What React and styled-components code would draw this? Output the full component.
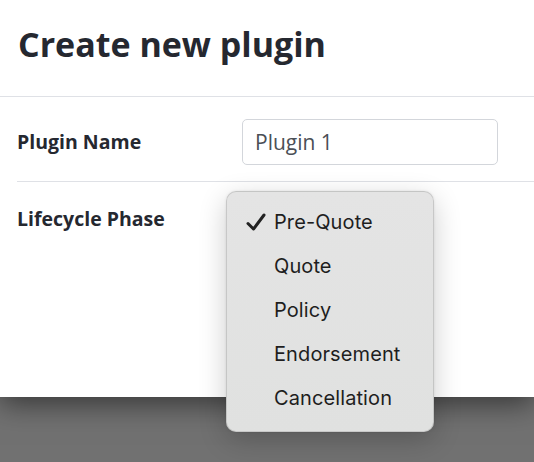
import React from "react";
import styled, { createGlobalStyle } from "styled-components";

const GlobalStyle = createGlobalStyle`
  html, body {
    margin: 0;
    padding: 0;
    width: 534px;
    height: 462px;
    overflow: hidden;
    background: #717171;
  }
  #root {
    height: 462px;
  }
`;

const Page = styled.div`
  position: relative;
  height: 462px;
  font-family: "Open Sans", "Noto Sans", sans-serif;
  color: #252830;
`;

const Modal = styled.div`
  height: 397px;
  background: #ffffff;
  box-shadow: 0 6px 28px rgba(0, 0, 0, 0.55);
`;

const Header = styled.div`
  height: 97px;
  box-sizing: border-box;
  padding: 22px 18px 0;
  border-bottom: 1px solid #dfe1e6;
`;

const Title = styled.h1`
  margin: 0;
  font-size: 34px;
  font-weight: 700;
  line-height: 44px;
`;

const Body = styled.div`
  padding-left: 17px;
`;

const Row = styled.div`
  display: flex;
  align-items: flex-start;
  height: ${(p) => p.$height}px;
  box-sizing: border-box;
  padding-top: ${(p) => p.$pad}px;
  border-bottom: ${(p) => (p.$divider ? "1px solid #dfe1e6" : "none")};
`;

const Label = styled.div`
  width: 225px;
  font-size: 19.5px;
  font-weight: 700;
  line-height: ${(p) => p.$lh || 24}px;
`;

const Input = styled.input`
  width: 256px;
  height: 46px;
  box-sizing: border-box;
  border: 1px solid #d3d6db;
  border-radius: 5px;
  padding: 0 12px;
  font-family: "Open Sans", "Noto Sans", sans-serif;
  font-size: 21px;
  color: #4b4f56;
  outline: none;
`;

const Menu = styled.div`
  position: absolute;
  left: 226px;
  top: 191px;
  width: 208px;
  height: 241px;
  box-sizing: border-box;
  padding-top: 8px;
  border-radius: 10px;
  border: 1px solid rgba(0, 0, 0, 0.12);
  background: linear-gradient(#e4e4e4, #e0e1e0);
  box-shadow: 0 8px 28px rgba(0, 0, 0, 0.2), 0 0 3px rgba(0, 0, 0, 0.08);
  font-family: "Inter", "Noto Sans", sans-serif;
  color: #1e1e1e;
`;

const Item = styled.div`
  display: flex;
  align-items: center;
  height: 44px;
  font-size: 20px;
  letter-spacing: 0.1px;
`;

const Check = styled.span`
  width: 47px;
  display: flex;
  justify-content: flex-end;
  padding-right: 8px;
  box-sizing: border-box;
`;

const phases = ["Pre-Quote", "Quote", "Policy", "Endorsement", "Cancellation"];

export default function App() {
  return (
    <Page>
      <GlobalStyle />
      <Modal>
        <Header>
          <Title>Create new plugin</Title>
        </Header>
        <Body>
          <Row $height={85} $pad={22} $divider>
            <Label $lh={46}>Plugin Name</Label>
            <Input defaultValue="Plugin 1" readOnly />
          </Row>
          <Row $height={80} $pad={25}>
            <Label>Lifecycle Phase</Label>
          </Row>
        </Body>
      </Modal>
      <Menu>
        {phases.map((p, i) => (
          <Item key={p}>
            <Check>
              {i === 0 && (
                <svg width="20" height="18" viewBox="0 0 20 18">
                  <path
                    d="M2 10.5 L7.5 16 L18 2"
                    fill="none"
                    stroke="#222"
                    strokeWidth="3"
                    strokeLinecap="round"
                    strokeLinejoin="round"
                  />
                </svg>
              )}
            </Check>
            {p}
          </Item>
        ))}
      </Menu>
    </Page>
  );
}
